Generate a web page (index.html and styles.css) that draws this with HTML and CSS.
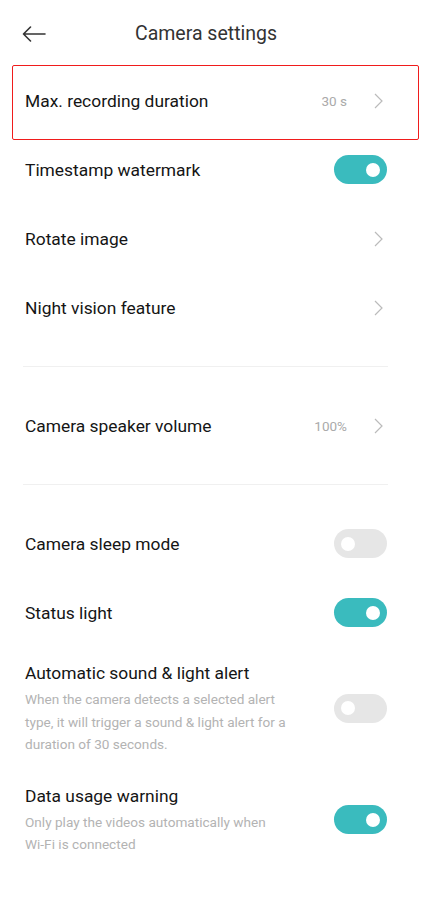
FILE: index.html
```html
<!DOCTYPE html>
<html lang="en">
<head>
  <meta charset="UTF-8" />
  <meta name="viewport" content="width=device-width, initial-scale=1.0"/>
  <title>Camera settings</title>
  <link rel="stylesheet" href="styles.css">
</head>
<body>

  <div class="header">
    <svg class="back" width="24" height="16" viewBox="0 0 24 16">
      <path d="M23 8H1.5M8.5 1L1.5 8l7 7" fill="none" stroke="#333" stroke-width="1.6" stroke-linecap="round" stroke-linejoin="round"/>
    </svg>
    <h1>Camera settings</h1>
  </div>

  <!-- General -->
  <div class="row highlight">
    <span class="label">Max. recording duration</span>
    <span class="value">30 s</span>
    <svg class="chevron" width="12" height="16" viewBox="0 0 12 16"><path d="M2 1l7 7-7 7" fill="none" stroke="#bbb" stroke-width="1.2"/></svg>
  </div>
  <div class="row">
    <span class="label">Timestamp watermark</span>
    <div class="toggle on"></div>
  </div>
  <div class="row">
    <span class="label">Rotate image</span>
    <svg class="chevron" width="12" height="16" viewBox="0 0 12 16"><path d="M2 1l7 7-7 7" fill="none" stroke="#bbb" stroke-width="1.2"/></svg>
  </div>
  <div class="row">
    <span class="label">Night vision feature</span>
    <svg class="chevron" width="12" height="16" viewBox="0 0 12 16"><path d="M2 1l7 7-7 7" fill="none" stroke="#bbb" stroke-width="1.2"/></svg>
  </div>

  <div class="divider"></div>

  <div class="row">
    <span class="label">Camera speaker volume</span>
    <span class="value">100%</span>
    <svg class="chevron" width="12" height="16" viewBox="0 0 12 16"><path d="M2 1l7 7-7 7" fill="none" stroke="#bbb" stroke-width="1.2"/></svg>
  </div>

  <div class="divider"></div>

  <div class="row">
    <span class="label">Camera sleep mode</span>
    <div class="toggle"></div>
  </div>
  <div class="row">
    <span class="label">Status light</span>
    <div class="toggle on"></div>
  </div>
  <div class="row tall">
    <div class="text">
      <div class="label">Automatic sound &amp; light alert</div>
      <div class="desc">When the camera detects a selected alert type, it will trigger a sound &amp; light alert for a duration of 30 seconds.</div>
    </div>
    <div class="toggle"></div>
  </div>
  <div class="row tall">
    <div class="text">
      <div class="label">Data usage warning</div>
      <div class="desc">Only play the videos automatically when <span class="nowrap">Wi-Fi</span> is connected</div>
    </div>
    <div class="toggle on"></div>
  </div>

</body>
</html>
```

FILE: styles.css
```css
body {
  font-family: Roboto, "Noto Sans", sans-serif;
  background: white;
  margin: 0;
  padding: 0;
  color: #151515;
}

.header {
  position: relative;
  height: 66px;
  display: flex;
  align-items: center;
  justify-content: center;
}

.back {
  position: absolute;
  left: 22px;
  top: 26px;
}

h1 {
  margin: 0 0 0 -21px;
  font-size: 19.5px;
  font-weight: 400;
  color: #333;
}

.row {
  position: relative;
  height: 69px;
  display: flex;
  align-items: center;
  padding: 0 46px 0 25px;
}

.highlight::after {
  content: "";
  position: absolute;
  left: 12px;
  right: 14px;
  top: -1px;
  bottom: -5px;
  border: 1.5px solid #f01c1c;
  border-radius: 2px;
}

.label {
  font-size: 17.4px;
  line-height: 24px;
  flex: 1;
}

.value {
  font-size: 13.5px;
  color: #aaa;
  margin-right: 26px;
}

.chevron {
  margin-right: 2px;
}

.divider {
  height: 1px;
  background: #f0f0f0;
  margin: 24px 45px 24px 23px;
}

.toggle {
  position: relative;
  width: 53px;
  height: 29px;
  border-radius: 15px;
  background: #e6e6e6;
  flex-shrink: 0;
}

.toggle::after {
  content: "";
  position: absolute;
  top: 7.5px;
  left: 7px;
  width: 14px;
  height: 14px;
  border-radius: 50%;
  background: white;
}

.toggle.on {
  background: #3abbbe;
}

.toggle.on::after {
  left: auto;
  right: 7px;
}

.tall {
  height: auto;
  padding-top: 14px;
  padding-bottom: 14px;
}

.text {
  flex: 1;
}

.text .label {
  display: block;
}

.desc {
  width: 266px;
  margin-top: 3px;
  font-size: 13.6px;
  line-height: 22.5px;
  color: #b3b3b3;
}

.nowrap {
  white-space: nowrap;
}
```
